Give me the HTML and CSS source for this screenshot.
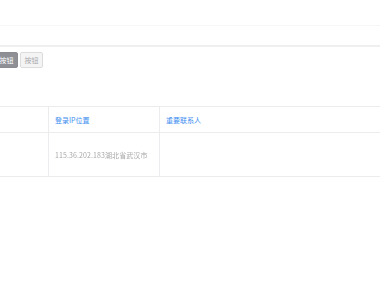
FILE: index.html
```html
<!DOCTYPE html>
<html lang="zh">
<head>
<meta charset="utf-8">
<link rel="stylesheet" href="styles.css">
</head>
<body>
<div class="page">
  <div class="bar-top"></div>
  <div class="bar-sub"></div>
  <div class="toolbar">
    <button class="btn btn-dark">按钮</button>
    <button class="btn btn-light">按钮</button>
  </div>
  <table class="grid">
    <thead>
      <tr>
        <th class="c1"></th>
        <th class="c2">登录IP位置</th>
        <th class="c3">重要联系人</th>
      </tr>
    </thead>
    <tbody>
      <tr>
        <td class="c1"></td>
        <td class="c2"><span class="blur">115.36.202.183湖北省武汉市</span></td>
        <td class="c3"></td>
      </tr>
    </tbody>
  </table>
</div>
</body>
</html>
```

FILE: styles.css
```css
html, body {
  margin: 0;
  padding: 0;
  background: #ffffff;
}
body {
  font-family: "Noto Sans CJK SC", "Noto Sans", sans-serif;
  overflow: hidden;
}
.page {
  width: 380px;
  height: 282px;
  overflow: hidden;
}
.bar-top {
  height: 25px;
  border-bottom: 1px solid #f6f6f6;
}
.bar-sub {
  height: 19px;
  border-bottom: 2px solid #efefef;
}
.toolbar {
  display: flex;
  gap: 2px;
  padding-top: 5px;
  margin-left: -5px;
  height: 15px;
}
.btn {
  box-sizing: border-box;
  height: 16px;
  width: 23px;
  padding: 0;
  font-family: inherit;
  font-size: 7px;
  line-height: 14px;
  border-radius: 2px;
  text-align: center;
}
.btn-dark {
  background: #8e9095;
  border: 1px solid #8a8c91;
  color: #ffffff;
}
.btn-light {
  background: #f4f4f5;
  border: 1px solid #dcdcdf;
  color: #a8a9ad;
}
.grid {
  margin-top: 39px;
  margin-left: -60px;
  border-collapse: collapse;
  width: 460px;
  table-layout: fixed;
}
.grid th, .grid td {
  padding: 0 0 0 6px;
  text-align: left;
  font-size: 7px;
  font-weight: normal;
  border-top: 1px solid #ececee;
  border-bottom: 1px solid #ececee;
  vertical-align: middle;
}
.grid th {
  height: 25px;
  color: #3d8ef0;
}
.grid td {
  height: 43px;
  color: #a8a8a8;
}
.grid .c1 { width: 102px; }
.grid .c2 { width: 104px; border-left: 1px solid #ececee; }
.grid .c3 { border-left: 1px solid #ececee; }
.blur {
  display: inline-block;
  filter: blur(0.7px);
  letter-spacing: 0.1px;
}
```
